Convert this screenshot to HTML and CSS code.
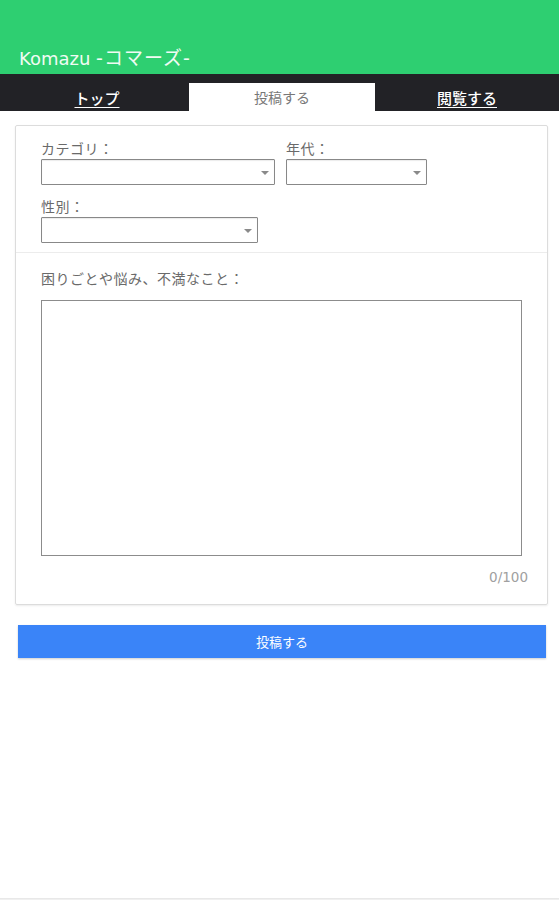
FILE: index.html
```html
<!DOCTYPE html>
<html lang="ja">
<head>
<meta charset="utf-8">
<link rel="stylesheet" href="styles.css">
</head>
<body>
<header class="hero">
  <h1 class="brand">Komazu <span class="brand-ja">-コマーズ-</span></h1>
</header>
<nav class="tabs">
  <a class="tab">トップ</a>
  <a class="tab active">投稿する</a>
  <a class="tab">閲覧する</a>
</nav>
<main class="main">
  <section class="card">
    <div class="fields">
      <div class="row">
        <div class="field">
          <label class="label">カテゴリ：</label>
          <div class="select w-cat"><span class="arrow"></span></div>
        </div>
        <div class="field">
          <label class="label">年代：</label>
          <div class="select w-age"><span class="arrow"></span></div>
        </div>
      </div>
      <div class="row">
        <div class="field">
          <label class="label">性別：</label>
          <div class="select w-sex"><span class="arrow"></span></div>
        </div>
      </div>
    </div>
    <div class="body">
      <label class="label">困りごとや悩み、不満なこと：</label>
      <div class="textarea"></div>
      <div class="counter">0/100</div>
    </div>
  </section>
  <button class="submit">投稿する</button>
</main>
<footer class="foot"></footer>
</body>
</html>
```
FILE: styles.css
```css
* { box-sizing: border-box; }
html, body { margin: 0; padding: 0; }
body {
  width: 559px;
  height: 900px;
  background: #fff;
  font-family: "Noto Sans CJK JP", "Noto Sans", sans-serif;
  position: relative;
  overflow: hidden;
}
.hero {
  height: 74px;
  background: #2ecf71;
  display: flex;
  align-items: flex-end;
  padding: 0 0 3px 19px;
}
.brand {
  margin: 0;
  font-family: "DejaVu Sans", "Noto Sans CJK JP", sans-serif;
  font-size: 18px;
  font-weight: 400;
  color: #f0fbf3;
  line-height: 24px;
}
.brand-ja {
  font-size: 19px;
  letter-spacing: 1px;
}
.tabs {
  height: 37px;
  background: #222226;
  display: grid;
  grid-template-columns: 189px 186px 1fr;
  align-items: end;
  padding-top: 9px;
}
.tab {
  height: 28px;
  display: flex;
  align-items: center;
  justify-content: center;
  font-size: 15px;
  color: #fff;
  text-decoration: underline;
  text-underline-offset: 3px;
  font-weight: 500;
}
.tab:first-child { padding-left: 5px; }
.tab:last-child { padding-left: 0; }
.tab.active {
  background: #fff;
  color: #777;
  text-decoration: none;
  font-weight: 400;
  font-size: 14px;
}
.main { padding: 14px 0 0 0; }
.card {
  margin-left: 15px;
  width: 533px;
  border: 1px solid #dcdcdc;
  border-radius: 2px;
  box-shadow: 0 1px 2px rgba(0,0,0,0.08);
}
.fields {
  padding: 12px 25px 9px 25px;
  border-bottom: 1px solid #ececec;
  display: flex;
  flex-direction: column;
  gap: 11px;
}
.row { display: flex; gap: 11px; }
.field { display: flex; flex-direction: column; }
.label {
  font-size: 14px;
  line-height: 21px;
  color: #6a6a6a;
  letter-spacing: 0.5px;
}
.select {
  height: 26px;
  border: 1px solid #888;
  border-radius: 1px;
  background: #fff;
  position: relative;
  box-shadow: inset 0 1px 1px rgba(0,0,0,0.08);
}
.w-cat { width: 234px; }
.w-age { width: 141px; }
.w-sex { width: 217px; }
.arrow {
  position: absolute;
  right: 5px;
  top: 11px;
  width: 0;
  height: 0;
  border-left: 4px solid transparent;
  border-right: 4px solid transparent;
  border-top: 4px solid #8a8a8a;
}
.body { padding: 15px 25px 18px 25px; }
.body .label { display: block; margin-bottom: 11px; }
.textarea {
  width: 481px;
  height: 256px;
  border: 1px solid #8c8c8c;
  background: #fff;
}
.counter {
  text-align: right;
  font-family: "DejaVu Sans", sans-serif;
  font-size: 13.5px;
  color: #a0a0a0;
  margin-top: 12px;
  margin-right: -6px;
  line-height: 18px;
}
.submit {
  display: block;
  margin: 20px 0 0 18px;
  width: 528px;
  height: 33px;
  border: none;
  background: #3a84f8;
  color: #fff;
  font-family: "Noto Sans CJK JP", "Noto Sans", sans-serif;
  font-size: 13px;
  box-shadow: 0 1px 2px rgba(0,0,0,0.2);
}
.foot {
  position: absolute;
  left: 0;
  right: 0;
  bottom: 0;
  height: 2px;
  border-top: 1px solid #e8e8e8;
  background: #f0f0f0;
}
```
